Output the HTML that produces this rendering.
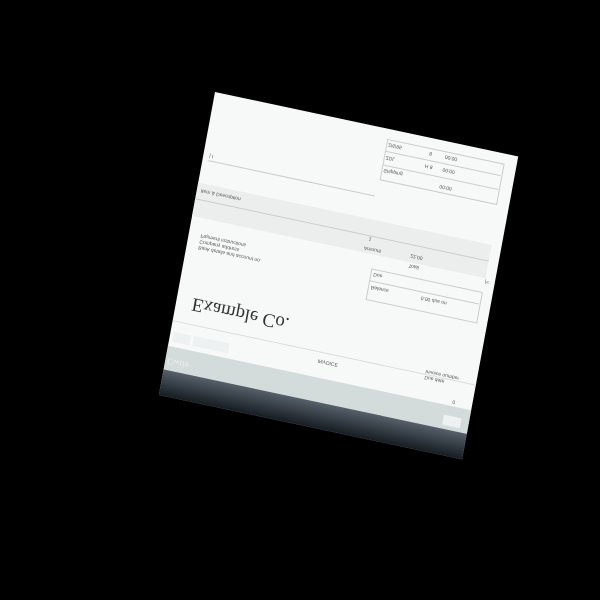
<!DOCTYPE html>
<html><head><style>
body{margin:0;width:600px;height:600px;background:#000;overflow:hidden;font-family:"Liberation Sans",sans-serif}
#doc{position:absolute;left:0;top:0;width:310px;height:308px;background:#f7f9f9;transform-origin:0 0;transform:translate(215px,92px) rotate(12deg) skewX(1.5deg)}
.t{position:absolute;font-size:5px;color:#555;transform:scaleY(-1);white-space:nowrap}
.ln{position:absolute;height:1px;background:#ccc}
.bx{position:absolute;border:1px solid #ccc}
</style></head><body>
<div id="doc">
  <div class="t" style="left:6px;top:60px">| I</div>
  <div class="ln" style="left:6px;top:68px;width:170px"></div>
  <div class="bx" style="left:178px;top:10px;width:118px;height:40px"></div>
  <div class="ln" style="left:178px;top:22px;width:118px"></div>
  <div class="ln" style="left:178px;top:36px;width:118px"></div>
  <div class="t" style="left:180px;top:12px">2/6/95</div><div class="t" style="left:222px;top:12px">8</div><div class="t" style="left:238px;top:12px">00:00</div>
  <div class="t" style="left:180px;top:25px">ZDL</div><div class="t" style="left:220px;top:25px">H 8</div><div class="t" style="left:238px;top:25px">00:00</div>
  <div class="t" style="left:180px;top:38px">Shipping</div><div class="t" style="left:238px;top:42px">00:00</div>
  <div style="position:absolute;left:0;top:92px;width:300px;height:34px;background:#eceeee"></div>
  <div class="t" style="left:4px;top:96px">Item &amp; Description</div>
  <div class="ln" style="left:0;top:108px;width:300px"></div>
  <div class="t" style="left:178px;top:108px">1</div>
  <div class="t" style="left:175px;top:118px">Amount</div><div class="t" style="left:222px;top:116px">22.00</div>
  <div class="t" style="left:222px;top:126px">Total</div><div class="t" style="left:300px;top:126px">|&lt;</div>
  <div class="t" style="left:12px;top:140px">Payment instructions</div>
  <div class="t" style="left:12px;top:146px">Company address</div>
  <div class="t" style="left:12px;top:152px">Bank details and account no.</div>
  <div class="bx" style="left:186px;top:140px;width:112px;height:30px"></div>
  <div class="ln" style="left:186px;top:152px;width:112px"></div>
  <div class="t" style="left:189px;top:142px">Due</div><div class="t" style="left:189px;top:155px">Balance</div><div class="t" style="left:240px;top:155px">0.00 due on</div>
  <div class="t" style="left:16px;top:200px;font-family:'Liberation Serif',serif;font-size:19px;color:#333">Example Co.</div>
  <div class="ln" style="left:0;top:232px;width:310px;background:#ddd"></div>
  <div class="t" style="left:150px;top:238px">INVOICE</div>
  <div class="t" style="left:258px;top:226px">Invoice number</div><div class="t" style="left:258px;top:232px">Due date</div>
  <div style="position:absolute;left:0;top:258px;width:310px;height:24px;background:#d4dbdb"></div>
  <div style="position:absolute;left:3px;top:243px;width:18px;height:10px;background:#eef1f1"></div>
  <div style="position:absolute;left:24px;top:243px;width:36px;height:10px;background:#eef1f1"></div>
  <div class="t" style="left:290px;top:250px">0</div>
  <div style="position:absolute;left:284px;top:268px;width:18px;height:10px;background:#eef1f1"></div>
  <div style="position:absolute;left:0;top:282px;width:310px;height:26px;background:linear-gradient(#56606a,#161c22)"></div>
  <div class="t" style="left:2px;top:268px;font-size:9px;color:#eee;font-family:'Liberation Serif',serif">Cwife</div>
</div>
</body></html>
